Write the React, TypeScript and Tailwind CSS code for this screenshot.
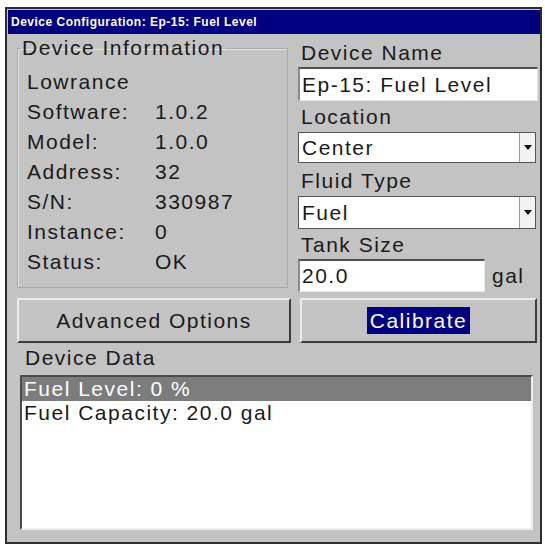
import type { ReactNode } from 'react'

const font = { fontFamily: '"Liberation Sans", Arial, sans-serif' }

function Label({ children, className = '' }: { children: ReactNode; className?: string }) {
  return <div className={`h-[22px] leading-[22px] pl-[3px] ${className}`}>{children}</div>
}

function TextBox({ value, className = '' }: { value: string; className?: string }) {
  return (
    <div
      className={`bg-white border-t-2 border-l-2 border-b border-r border-t-[#505050] border-l-[#8a8a8a] border-b-[#e6e6e6] border-r-[#e6e6e6] pl-[2px] flex items-center ${className}`}
    >
      {value}
    </div>
  )
}

function Select({ value, className = '' }: { value: string; className?: string }) {
  return (
    <div className={`bg-white border border-[#555] flex items-stretch ${className}`}>
      <div className="flex-1 pl-[3px] flex items-center">{value}</div>
      <div className="w-[16px] border-l border-[#9a9a9a] bg-[#f2f2f2] flex items-center justify-center">
        <svg width="8" height="5" viewBox="0 0 8 5">
          <path d="M0 0 H8 L4 5 Z" fill="#111" />
        </svg>
      </div>
    </div>
  )
}

const info: [string, string][] = [
  ['Software:', '1.0.2'],
  ['Model:', '1.0.0'],
  ['Address:', '32'],
  ['S/N:', '330987'],
  ['Instance:', '0'],
  ['Status:', 'OK'],
]

export default function App() {
  return (
    <div className="w-[545px] h-[546px] bg-white pt-[7px] pl-[5px]" style={font}>
      <div className="w-[537px] h-[537px] border-2 border-[#2e2e2e] bg-[#c3c3c3] flex flex-col text-[21px] tracking-[1.5px] text-[#1a1a1a]">
        {/* title bar */}
        <div className="ml-[1px] mt-[1px] h-[24px] bg-[#000080] text-white text-[12px] font-bold tracking-[0.5px] leading-[24px] pl-[3px]">
          Device Configuration: Ep-15: Fuel Level
        </div>

        <div className="flex pl-[10px] gap-[10px]">
          {/* Device Information */}
          <fieldset className="w-[271px] h-[251px] mt-[3px] border border-[#a8a8a8] shadow-[inset_1px_1px_0_#e4e4e4] px-[3px]">
            <legend className="px-[1px] leading-[22px]">Device Information</legend>
            <div className="pl-[6px] pt-[8px]">
              <div className="h-[30px] leading-[30px]">Lowrance</div>
              {info.map(([k, v]) => (
                <div key={k} className="h-[30px] leading-[30px] flex">
                  <span className="w-[128px]">{k}</span>
                  <span>{v}</span>
                </div>
              ))}
            </div>
          </fieldset>

          {/* right column */}
          <div className="w-[240px] flex flex-col">
            <Label className="mt-[8px]">Device Name</Label>
            <TextBox value="Ep-15: Fuel Level" className="mt-[3px] h-[34px]" />
            <Label className="mt-[5px]">Location</Label>
            <Select value="Center" className="mt-[4px] h-[31px] w-[238px]" />
            <Label className="mt-[7px]">Fluid Type</Label>
            <Select value="Fuel" className="mt-[4px] h-[33px] w-[238px]" />
            <Label className="mt-[5px]">Tank Size</Label>
            <div className="mt-[3px] flex items-center gap-[7px]">
              <TextBox value="20.0" className="h-[33px] w-[187px]" />
              <span>gal</span>
            </div>
          </div>
        </div>

        {/* buttons */}
        <div className="flex pl-[10px] gap-[9px] mt-[6px]">
          <div className="w-[274px] h-[45px] border-2 border-t-[#ececec] border-l-[#ececec] border-b-[#3c3c3c] border-r-[#3c3c3c] flex items-center justify-center">
            Advanced Options
          </div>
          <div className="w-[237px] h-[45px] border-2 border-t-[#ececec] border-l-[#ececec] border-b-[#3c3c3c] border-r-[#3c3c3c] flex items-center justify-center">
            <span className="bg-[#000080] text-white px-[3px] leading-[27px]">Calibrate</span>
          </div>
        </div>

        {/* device data */}
        <div className="pl-[13px] mt-[4px]">
          <Label className="pl-[5px]">Device Data</Label>
          <div className="mt-[6px] w-[513px] h-[155px] bg-white border-2 border-t-[#4a4a4a] border-l-[#4a4a4a] border-b-[#eeeeee] border-r-[#eeeeee]">
            <div className="h-[24px] leading-[24px] bg-[#7c7c7c] text-white pl-[2px]">Fuel Level: 0 %</div>
            <div className="h-[24px] leading-[24px] pl-[2px]">Fuel Capacity: 20.0 gal</div>
          </div>
        </div>
      </div>
    </div>
  )
}
